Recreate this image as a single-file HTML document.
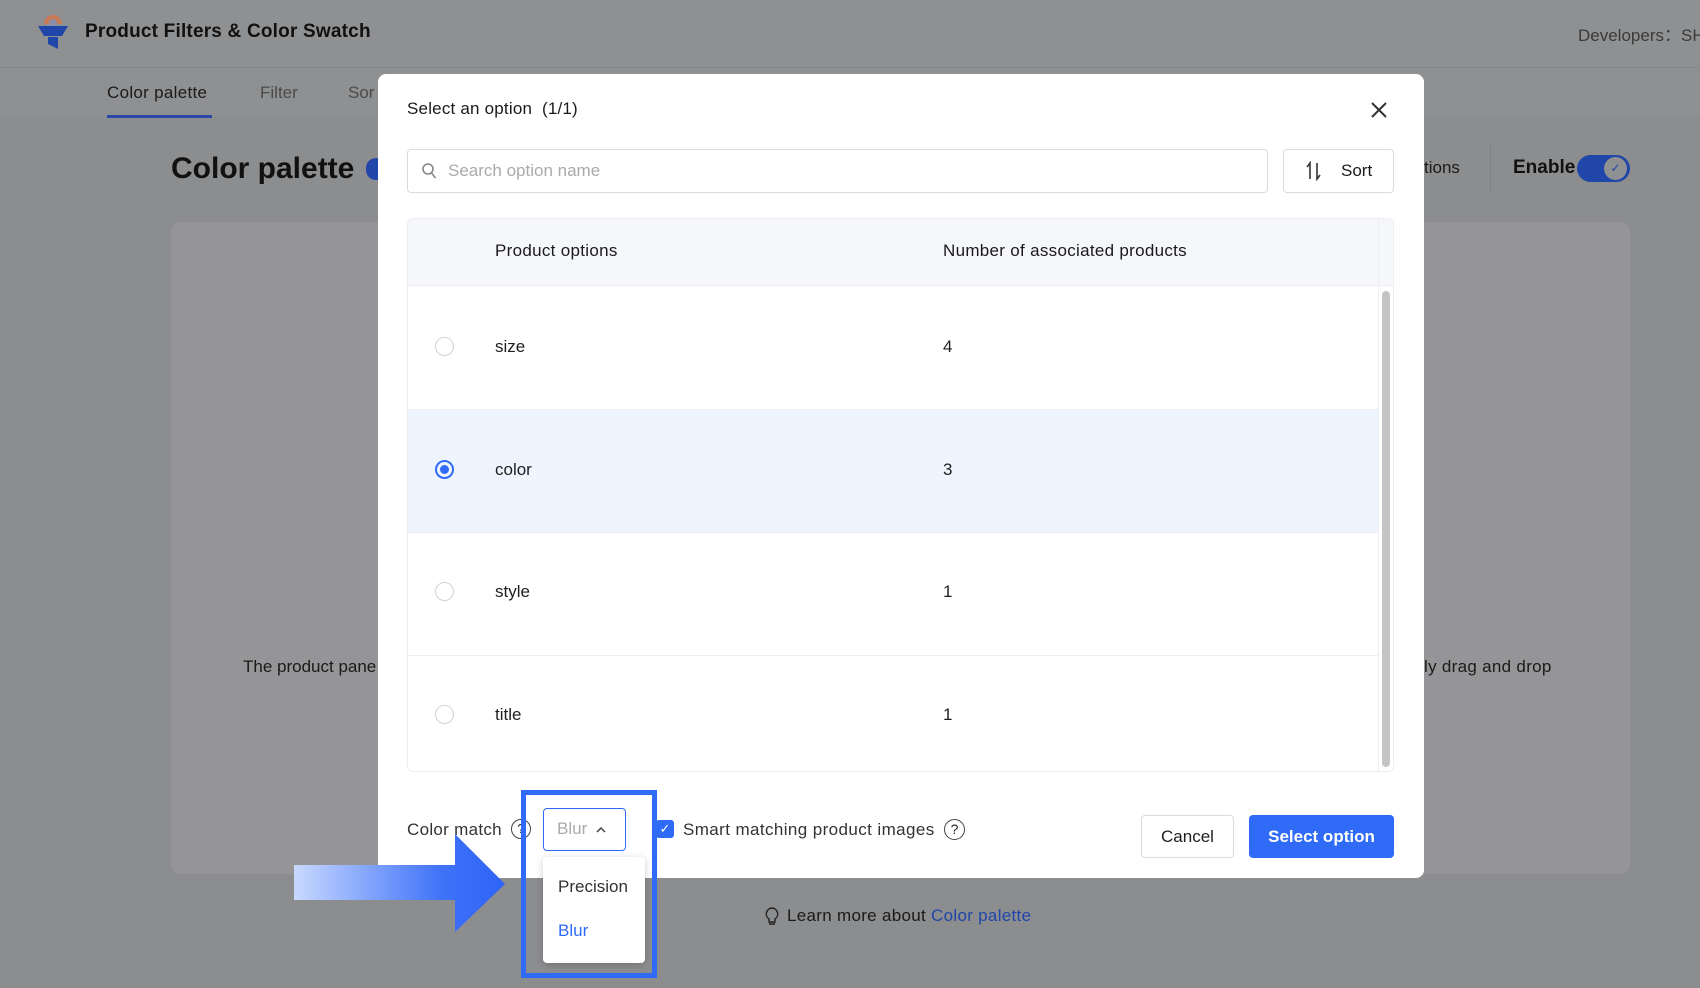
<!DOCTYPE html>
<html><head><meta charset="utf-8"><style>
*{box-sizing:border-box;margin:0;padding:0}
body{width:1700px;height:988px;overflow:hidden;background:#8c8d8f;font-family:"Liberation Sans",sans-serif;color:#1f1f1f;position:relative}
.a{position:absolute;white-space:nowrap}
</style></head><body>
<div class="a" style="left:0;top:0;width:1700px;height:68px;background:#8f9092;border-bottom:1px solid #868789"></div>
<div class="a" style="left:0;top:68px;width:1700px;height:48px;background:#8f9092"></div>
<svg class="a" style="left:36px;top:10px" width="34" height="40" viewBox="0 0 34 40"><path d="M8 14a9 9 0 0 1 18 0z" fill="#c97a56"/><circle cx="17" cy="13" r="4" fill="#8c8fa8"/><path d="M2 16h30l-6 10H8z" fill="#1f46a8"/><path d="M12 27h10v12l-10-5z" fill="#1f46a8"/></svg>
<div class="a" style="left:85px;top:21px;font-size:19px;font-weight:bold;color:#111;letter-spacing:0.2px">Product Filters &amp; Color Swatch</div>
<div class="a" style="left:1578px;top:21px;font-size:17px;color:#3a3a3a">Developers：SH</div>
<div class="a" style="left:107px;top:83px;font-size:17px;color:#1a1a1a;letter-spacing:0.3px">Color palette</div>
<div class="a" style="left:107px;top:115px;width:105px;height:3px;background:#2947a8"></div>
<div class="a" style="left:260px;top:83px;font-size:17px;color:#4a4a4a">Filter</div>
<div class="a" style="left:348px;top:83px;font-size:17px;color:#4a4a4a">Sor</div>
<div class="a" style="left:171px;top:152px;font-size:30px;font-weight:bold;color:#111">Color palette</div>
<div class="a" style="left:366px;top:158px;width:20px;height:22px;border-radius:10px;background:#1f46a8"></div>
<div class="a" style="left:1424px;top:158px;font-size:17px;color:#1a1a1a">tions</div>
<div class="a" style="left:1490px;top:145px;width:1px;height:46px;background:#7f8082"></div>
<div class="a" style="left:1513px;top:157px;font-size:19px;font-weight:bold;color:#111">Enable</div>
<div class="a" style="left:1577px;top:155px;width:53px;height:27px;border-radius:14px;background:#1f46a8"><div style="position:absolute;right:3px;top:2px;width:23px;height:23px;border-radius:50%;background:#8f9092;color:#1f46a8;font-size:12px;text-align:center;line-height:23px">✓</div></div>
<div class="a" style="left:171px;top:222px;width:1459px;height:652px;background:#959597;border-radius:10px"></div>
<div class="a" style="left:243px;top:657px;font-size:17px;color:#1a1a1a">The product pane</div>
<div class="a" style="left:1424px;top:657px;font-size:17px;color:#1a1a1a;letter-spacing:0.3px">ly drag and drop</div>
<svg class="a" style="left:764px;top:907px" width="16" height="18" viewBox="0 0 16 18"><path d="M8 1a6 6 0 0 0-3 11v3h6v-3a6 6 0 0 0-3-11zM5 17h6" fill="none" stroke="#222" stroke-width="1.4"/></svg>
<div class="a" style="left:787px;top:906px;font-size:17px;color:#1a1a1a;letter-spacing:0.3px">Learn more about <span style="color:#1f46a8">Color palette</span></div>

<div class="a" style="left:378px;top:74px;width:1046px;height:804px;background:#fff;border-radius:8px"></div>
<div class="a" style="left:407px;top:99px;font-size:17px;color:#1a1a1a;letter-spacing:0.2px">Select an option&nbsp; (1/1)</div>
<svg class="a" style="left:1370px;top:101px" width="18" height="18" viewBox="0 0 18 18"><path d="M2 2l14 14M16 2L2 16" stroke="#333" stroke-width="2"/></svg>
<div class="a" style="left:407px;top:149px;width:861px;height:44px;border:1px solid #d9dbe0;border-radius:4px"></div>
<svg class="a" style="left:421px;top:162px" width="16" height="18" viewBox="0 0 16 18"><circle cx="7" cy="7" r="5" fill="none" stroke="#888" stroke-width="1.6"/><path d="M10.5 11l4 5" stroke="#888" stroke-width="1.6"/></svg>
<div class="a" style="left:448px;top:161px;font-size:17px;color:#aaa">Search option name</div>
<div class="a" style="left:1283px;top:149px;width:111px;height:44px;border:1px solid #d9dbe0;border-radius:4px"></div>
<svg class="a" style="left:1304px;top:161px" width="20" height="20" viewBox="0 0 20 20"><path d="M6 18V2L3 6M13 2v16l3-4" fill="none" stroke="#333" stroke-width="1.6"/></svg>
<div class="a" style="left:1341px;top:161px;font-size:17px;color:#1a1a1a">Sort</div>
<div class="a" style="left:407px;top:218px;width:987px;height:554px;border:1px solid #eceef2;border-radius:6px;overflow:hidden">
<div style="position:absolute;left:0;top:0;width:987px;height:67px;background:#f5f7fa;border-bottom:1px solid #eceef2"></div>
<div style="position:absolute;left:0;top:190px;width:970px;height:123px;background:#eef5fe"></div>
<div style="position:absolute;left:0;top:190px;width:970px;height:1px;background:#eceef2"></div>
<div style="position:absolute;left:0;top:313px;width:970px;height:1px;background:#eceef2"></div>
<div style="position:absolute;left:0;top:436px;width:970px;height:1px;background:#eceef2"></div>
<div style="position:absolute;left:970px;top:0;width:1px;height:554px;background:#eceef2"></div>
<div style="position:absolute;left:974px;top:72px;width:8px;height:476px;background:#c4c4c4;border-radius:4px"></div>
</div>
<div class="a" style="left:495px;top:241px;font-size:17px;color:#1a1a1a;letter-spacing:0.3px">Product options</div>
<div class="a" style="left:943px;top:241px;font-size:17px;color:#1a1a1a;letter-spacing:0.3px">Number of associated products</div>
<div class="a" style="left:435px;top:337px;width:19px;height:19px;border:1.5px solid #d0d2d6;border-radius:50%"></div>
<div class="a" style="left:435px;top:460px;width:19px;height:19px;border:2px solid #2f6bf6;border-radius:50%"><div style="position:absolute;left:3px;top:3px;width:9px;height:9px;border-radius:50%;background:#2f6bf6"></div></div>
<div class="a" style="left:435px;top:582px;width:19px;height:19px;border:1.5px solid #d0d2d6;border-radius:50%"></div>
<div class="a" style="left:435px;top:705px;width:19px;height:19px;border:1.5px solid #d0d2d6;border-radius:50%"></div>
<div class="a" style="left:495px;top:337px;font-size:17px">size</div><div class="a" style="left:943px;top:337px;font-size:17px">4</div>
<div class="a" style="left:495px;top:460px;font-size:17px">color</div><div class="a" style="left:943px;top:460px;font-size:17px">3</div>
<div class="a" style="left:495px;top:582px;font-size:17px">style</div><div class="a" style="left:943px;top:582px;font-size:17px">1</div>
<div class="a" style="left:495px;top:705px;font-size:17px">title</div><div class="a" style="left:943px;top:705px;font-size:17px">1</div>

<div class="a" style="left:407px;top:820px;font-size:17px;color:#333;letter-spacing:0.3px">Color match</div>
<div class="a" style="left:511px;top:819px;width:20px;height:20px;border:1.5px solid #444;border-radius:50%;font-size:13px;text-align:center;line-height:17px">?</div>
<div class="a" style="left:543px;top:808px;width:83px;height:43px;border:1px solid #2f6bf6;border-radius:4px"></div>
<div class="a" style="left:557px;top:819px;font-size:17px;color:#aaa">Blur</div>
<svg class="a" style="left:596px;top:826px" width="10" height="8" viewBox="0 0 10 8"><path d="M1 6l4-4 4 4" fill="none" stroke="#444" stroke-width="1.5"/></svg>
<div class="a" style="left:656px;top:820px;width:18px;height:18px;background:#2f6bf6;border-radius:3px;color:#fff;font-size:13px;text-align:center;line-height:18px">✓</div>
<div class="a" style="left:683px;top:820px;font-size:17px;color:#333;letter-spacing:0.4px">Smart matching product images</div>
<div class="a" style="left:944px;top:819px;width:21px;height:21px;border:1.5px solid #444;border-radius:50%;font-size:14px;text-align:center;line-height:18px">?</div>
<div class="a" style="left:1141px;top:815px;width:93px;height:43px;border:1px solid #d9dbe0;border-radius:4px;font-size:17px;text-align:center;line-height:41px">Cancel</div>
<div class="a" style="left:1249px;top:815px;width:145px;height:43px;background:#2f6bf6;border-radius:4px;color:#fff;font-size:17px;font-weight:bold;text-align:center;line-height:43px">Select option</div>

<div class="a" style="left:543px;top:857px;width:102px;height:106px;background:#fff;border-radius:4px;box-shadow:0 2px 8px rgba(0,0,0,.2)"></div>
<div class="a" style="left:558px;top:877px;font-size:17px;color:#333">Precision</div>
<div class="a" style="left:558px;top:921px;font-size:17px;color:#2f6bf6">Blur</div>
<div class="a" style="left:521px;top:790px;width:136px;height:188px;border:5px solid #2f6bf6"></div>
<svg class="a" style="left:294px;top:834px" width="212" height="100" viewBox="0 0 212 100"><defs><linearGradient id="g" x1="0" x2="1"><stop offset="0" stop-color="#c8d8ff"/><stop offset="0.7" stop-color="#3f72f8"/><stop offset="1" stop-color="#2f63f6"/></linearGradient></defs><path d="M0 31h161V0l50 50-50 48V66H0z" fill="url(#g)"/></svg>
</body></html>
